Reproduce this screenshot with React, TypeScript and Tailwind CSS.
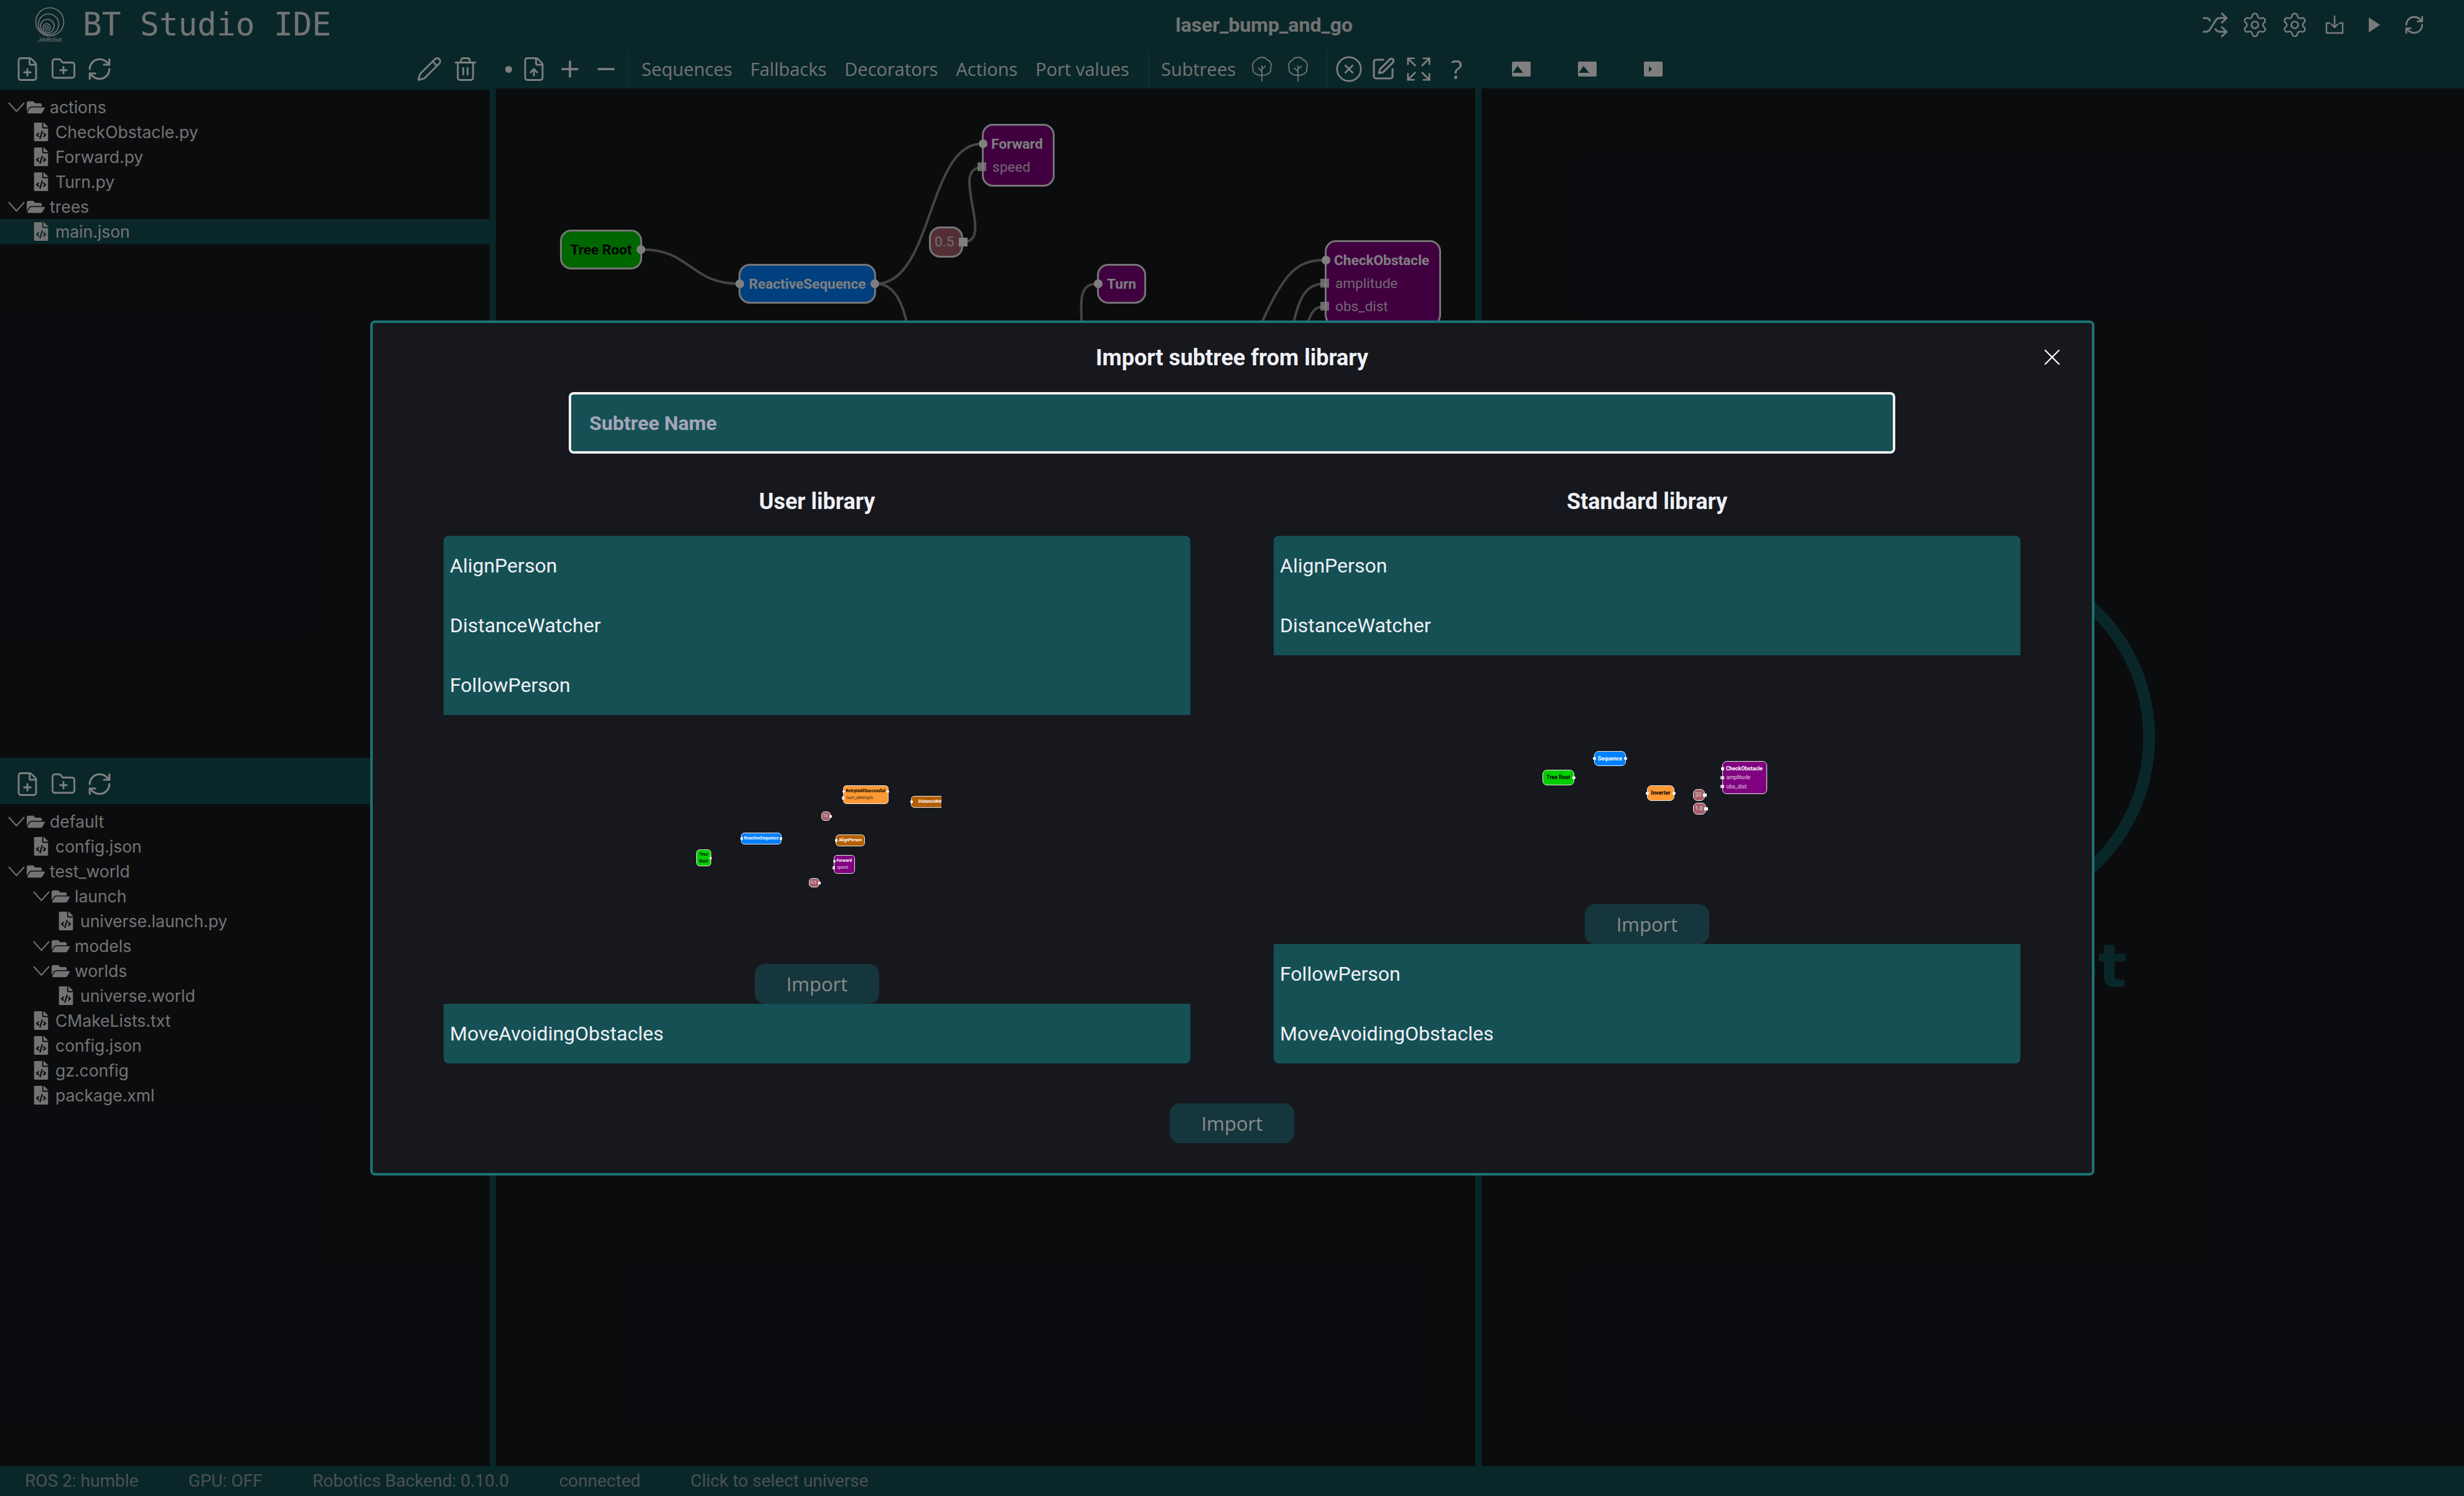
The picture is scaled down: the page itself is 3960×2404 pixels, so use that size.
import {
  CircleX,
  Expand,
  FilePlus,
  FileUp,
  FolderPlus,
  Minus,
  Pencil,
  Plus,
  RefreshCw,
  Settings,
  Shuffle,
  SquarePen,
  Trash2,
  X,
} from "lucide-react";
import { FaFileCode, FaFolderOpen } from "react-icons/fa";

type Entry = { name: string; depth: number; folder?: boolean; active?: boolean };

const actionFiles: Entry[] = [
  { name: "actions", depth: 0, folder: true },
  { name: "CheckObstacle.py", depth: 0 },
  { name: "Forward.py", depth: 0 },
  { name: "Turn.py", depth: 0 },
  { name: "trees", depth: 0, folder: true },
  { name: "main.json", depth: 0, active: true },
];

const universeFiles: Entry[] = [
  { name: "default", depth: 0, folder: true },
  { name: "config.json", depth: 0 },
  { name: "test_world", depth: 0, folder: true },
  { name: "launch", depth: 1, folder: true },
  { name: "universe.launch.py", depth: 1 },
  { name: "models", depth: 1, folder: true },
  { name: "worlds", depth: 1, folder: true },
  { name: "universe.world", depth: 1 },
  { name: "CMakeLists.txt", depth: 0 },
  { name: "config.json", depth: 0 },
  { name: "gz.config", depth: 0 },
  { name: "package.xml", depth: 0 },
];

type GraphNode = {
  label: string;
  x: number;
  y: number;
  w: number;
  h: number;
  bg: string;
  text: string;
  input?: boolean;
  output?: boolean;
  value?: boolean;
  ports?: string[];
};

const GREEN = "#00cc00";
const BLUE = "#0080ff";
const ORANGE = "#ff9933";
const BROWN = "#b35f00";
const PURPLE = "#800080";
const TAG = "#a65e6a";

const canvasNodes: GraphNode[] = [
  { label: "Tree Root", x: 103, y: 227, w: 132, h: 64, bg: GREEN, text: "#000", output: true },
  { label: "ReactiveSequence", x: 390, y: 282, w: 221, h: 64, bg: BLUE, text: "#fff", input: true, output: true },
  { label: "Forward", x: 781, y: 57, w: 117, h: 101, bg: PURPLE, text: "#fff", input: true, ports: ["speed"] },
  { label: "0.5", x: 696, y: 222, w: 55, h: 50, bg: TAG, text: "#ddd", value: true },
  { label: "Turn", x: 966, y: 282, w: 79, h: 64, bg: PURPLE, text: "#fff", input: true },
  { label: "CheckObstacle", x: 1332, y: 244, w: 187, h: 138, bg: PURPLE, text: "#fff", input: true, ports: ["amplitude", "obs_dist"] },
];

const userPreview: GraphNode[] = [
  { label: "Tree Root", x: 6, y: 216, w: 24, h: 27, bg: GREEN, text: "#000", output: true },
  { label: "ReactiveSequence", x: 78, y: 189, w: 65, h: 19, bg: BLUE, text: "#fff", input: true, output: true },
  { label: "RetryUntilSuccessful", x: 242, y: 113, w: 73, h: 30, bg: ORANGE, text: "#000", input: true, output: true, ports: ["num_attempts"] },
  { label: "DistanceWatcher", x: 351, y: 130, w: 75, h: 19, bg: BROWN, text: "#fff", input: true },
  { label: "AlignPerson", x: 230, y: 192, w: 47, h: 19, bg: BROWN, text: "#fff", input: true },
  { label: "Forward", x: 227, y: 225, w: 34, h: 30, bg: PURPLE, text: "#fff", input: true, ports: ["speed"] },
  { label: "10", x: 207, y: 155, w: 15, h: 15, bg: TAG, text: "#ddd", value: true },
  { label: "0.6", x: 187, y: 262, w: 17, h: 15, bg: TAG, text: "#ddd", value: true },
];

const standardPreview: GraphNode[] = [
  { label: "Tree Root", x: 32, y: 184, w: 51, h: 25, bg: GREEN, text: "#000", output: true },
  { label: "Sequence", x: 115, y: 154, w: 51, h: 24, bg: BLUE, text: "#fff", input: true, output: true },
  { label: "Inverter", x: 200, y: 209, w: 44, h: 25, bg: ORANGE, text: "#000", input: true, output: true },
  { label: "20", x: 274, y: 215, w: 19, h: 19, bg: TAG, text: "#ddd", value: true },
  { label: "1.0", x: 274, y: 237, w: 21, h: 19, bg: TAG, text: "#ddd", value: true },
  { label: "CheckObstacle", x: 321, y: 170, w: 72, h: 53, bg: PURPLE, text: "#fff", input: true, ports: ["amplitude", "obs_dist"] },
];

function Handle({ k, side, square }: { k: number; side: "left" | "right"; square?: boolean }) {
  const size = 14 * k;
  return (
    <span
      className={`absolute top-1/2 -translate-y-1/2 bg-white ${square ? "" : "rounded-full"}`}
      style={{ width: size, height: size, [side]: -size / 2 - 3 * k + (square ? 0 : 2 * k) }}
    />
  );
}

function FlowNode({ node, k }: { node: GraphNode; k: number }) {
  const pad = 12 * k;
  return (
    <div
      className="absolute flex flex-col justify-center border-solid border-[#eaeaea]"
      style={{
        left: node.x,
        top: node.y,
        width: node.w,
        height: node.h,
        backgroundColor: node.bg,
        color: node.text,
        borderWidth: 3 * k,
        borderRadius: 18 * k,
        fontSize: 22.6 * k,
        lineHeight: `${37 * k}px`,
      }}
    >
      {node.value ? (
        <div className="relative h-full" style={{ paddingLeft: 6 * k, lineHeight: `${node.h - 6 * k}px` }}>
          {node.label}
          <Handle k={k} side="right" square />
        </div>
      ) : (
        <div className={`relative font-bold ${node.ports ? "text-left" : "text-center"}`} style={{ paddingLeft: pad, paddingRight: pad }}>
          {node.input && <Handle k={k} side="left" />}
          {node.label}
          {node.output && <Handle k={k} side="right" />}
        </div>
      )}
      {node.ports?.map((port) => (
        <div key={port} className="relative font-normal opacity-80" style={{ paddingLeft: 14 * k }}>
          <Handle k={k} side="left" square />
          {port}
        </div>
      ))}
    </div>
  );
}

function Logo() {
  return (
    <svg width="48" height="48" viewBox="0 0 48 48" fill="none" stroke="#e6e6e6" strokeWidth="1.6" className="shrink-0">
      <circle cx="24" cy="24" r="22.5" />
      <circle cx="22" cy="28" r="16.5" />
      <circle cx="20" cy="31" r="11" />
      <circle cx="19" cy="33" r="6" />
      <circle cx="19" cy="33" r="2.5" />
    </svg>
  );
}

function SubtreeIcon({ className }: { className: string }) {
  return (
    <svg width="34" height="40" viewBox="0 0 34 40" fill="none" stroke="currentColor" strokeWidth="1.8" className={className}>
      <path d="M17 30 C6 30 1 24 3 18 C0 12 5 6 9 5 C11 0 23 0 25 5 C30 6 34 12 31 18 C33 24 28 30 17 30 Z" />
      <path d="M17 40 V14 M17 24 L11 18 M17 20 L23 15" />
    </svg>
  );
}

function TreeRow({ entry }: { entry: Entry }) {
  if (entry.folder) {
    return (
      <div className="flex h-[40px] items-center text-[#e6e6e6]" style={{ paddingLeft: 13 + entry.depth * 40 }}>
        <svg width="27" height="16" viewBox="0 0 27 16" fill="none" stroke="#e6e6e6" strokeWidth="2" className="shrink-0">
          <polyline points="1,1 13.5,15 26,1" />
        </svg>
        <FaFolderOpen className="ml-[3px] shrink-0" size={29} />
        <span className="ml-[8px]">{entry.name}</span>
      </div>
    );
  }
  return (
    <div
      className={`flex h-[40px] items-center text-[#e6e6e6] ${entry.active ? "bg-[#134f53]" : ""}`}
      style={{ paddingLeft: 51 + entry.depth * 40 }}
    >
      <FaFileCode className="shrink-0" size={30} />
      <span className="ml-[8px]">{entry.name}</span>
    </div>
  );
}

function FileTools() {
  return (
    <div className="flex items-center gap-[16px] pl-[23px] text-white">
      <FilePlus size={42} strokeWidth={1.6} />
      <FolderPlus size={42} strokeWidth={1.6} />
      <RefreshCw size={42} strokeWidth={1.8} />
    </div>
  );
}

function ImportButton() {
  return (
    <button className="flex h-[64px] w-[200px] items-center justify-center rounded-[16px] bg-[#15363c] font-['Open_Sans',sans-serif] text-[31px] text-[#8a8c8e]">
      Import
    </button>
  );
}

function LibraryRows({ names }: { names: string[] }) {
  return (
    <div className="bg-[#155055]">
      {names.map((name) => (
        <div key={name} className="flex h-[96px] items-center pl-[10px] text-[32px] text-[#f0f0f5]">
          {name}
        </div>
      ))}
    </div>
  );
}

function Library({ title, above, below, nodes, k }: { title: string; above: string[]; below: string[]; nodes: GraphNode[]; k: number }) {
  return (
    <div className="w-[1200px]">
      <h2 className="h-[44px] text-center text-[36px] leading-[44px] font-bold text-[#f0f0f5]">{title}</h2>
      <div className="mt-[33px] overflow-hidden rounded-[8px]">
        <LibraryRows names={above} />
        <div className="flex flex-col items-center">
          <div className="relative h-[400px] w-[400px] overflow-hidden">
            {nodes.map((node) => (
              <FlowNode key={node.label + node.x} node={node} k={k} />
            ))}
          </div>
          <ImportButton />
        </div>
        <LibraryRows names={below} />
      </div>
    </div>
  );
}

export default function App() {
  return (
    <div className="relative flex h-[2404px] w-[3960px] flex-col overflow-hidden bg-[#134f53] font-['Roboto',sans-serif]">
      <header className="flex h-[80px] shrink-0 items-center text-white">
        <div className="ml-[56px] flex w-[48px] flex-col items-center">
          <Logo />
          <span className="mt-[1px] text-[9px] leading-[9px] text-[#e6e6e6]">JdeRobot</span>
        </div>
        <h1 className="ml-[29px] font-['DejaVu_Sans_Mono',monospace] text-[51px] text-[#e6e6e6]">BT Studio IDE</h1>
        <span className="ml-[1357px] text-[32px] font-bold text-[#e6e6e6]">laser_bump_and_go</span>
        <div className="ml-auto mr-[48px] flex items-center text-[#f5f5f5]">
          <span className="flex w-[64px] justify-center"><Shuffle size={44} strokeWidth={1.6} /></span>
          <span className="flex w-[64px] justify-center"><Settings size={44} strokeWidth={1.4} /></span>
          <span className="flex w-[64px] justify-center"><Settings size={44} strokeWidth={1.4} /></span>
          <span className="flex w-[64px] justify-center">
            <svg width="32" height="30" viewBox="0 0 32 30" fill="none" stroke="currentColor" strokeWidth="2.4">
              <path d="M16 0 V19 M10 13 L16 19 L22 13 M9 12 H3 V28 H29 V12 H23" />
            </svg>
          </span>
          <span className="flex w-[64px] justify-center">
            <svg width="18" height="24" viewBox="0 0 18 24" fill="currentColor"><polygon points="0,0 18,12 0,24" /></svg>
          </span>
          <span className="flex w-[64px] justify-center"><RefreshCw size={34} strokeWidth={2} /></span>
        </div>
      </header>

      <div className="flex h-[62px] shrink-0 items-stretch text-white">
        <div className="flex w-[1009px] items-center justify-between pr-[14px]">
          <FileTools />
          <div className="flex items-center">
            <Pencil size={42} strokeWidth={1.6} />
            <Trash2 className="ml-[16px]" size={42} strokeWidth={1.6} />
            <span className="ml-[43px] h-[11px] w-[11px] rounded-full bg-white" />
            <FileUp className="ml-[14px]" size={42} strokeWidth={1.6} />
            <Plus className="ml-[16px]" size={42} strokeWidth={2} />
            <Minus className="ml-[16px]" size={42} strokeWidth={2} />
          </div>
        </div>
        <div className="flex w-[836px] items-center gap-[29px] border-l-2 border-[#1c6469] pl-[20px] font-['Open_Sans',sans-serif] text-[29px] text-[#e6e6e6]">
          <span>Sequences</span>
          <span>Fallbacks</span>
          <span>Decorators</span>
          <span>Actions</span>
          <span>Port values</span>
        </div>
        <div className="flex w-[287px] items-center border-l-2 border-[#1c6469] pl-[19px] font-['Open_Sans',sans-serif] text-[29px] text-[#e6e6e6]">
          <span>Subtrees</span>
          <SubtreeIcon className="ml-[25px] shrink-0" />
          <SubtreeIcon className="ml-[24px] shrink-0" />
        </div>
        <div className="flex flex-1 items-center border-l-2 border-[#1c6469] pl-[11px]">
          <CircleX size={46} strokeWidth={1.4} />
          <SquarePen className="ml-[12px]" size={40} strokeWidth={1.8} />
          <Expand className="ml-[14px]" size={46} strokeWidth={1.4} />
          <span className="ml-[26px] w-[24px] text-center font-['Open_Sans',sans-serif] text-[42px] leading-none">?</span>
          <span className="ml-[77px] flex w-[436px] gap-[76px]">
            {[0, 1].map((i) => (
              <svg key={i} width="30" height="24" viewBox="0 0 30 24">
                <rect width="30" height="24" rx="2" fill="#fff" />
                <polygon points="1,18 9,7 18,18" fill="#134f53" />
              </svg>
            ))}
            <svg width="30" height="24" viewBox="0 0 30 24">
              <rect width="30" height="24" rx="2" fill="#fff" />
              <polygon points="8,7 13,12 8,17" fill="#134f53" />
            </svg>
          </span>
        </div>
      </div>

      <main className="flex min-h-0 flex-1 gap-[10px]">
        <aside className="mt-[2px] flex w-[787px] flex-col font-['Inter',sans-serif] text-[26.5px] leading-[40px]">
          <div className="h-[1074px] bg-[#16181d] pt-[8px]">
            {actionFiles.map((entry) => (
              <TreeRow key={entry.name} entry={entry} />
            ))}
          </div>
          <div className="flex h-[74px] items-center pt-[10px]">
            <FileTools />
          </div>
          <div className="flex-1 bg-[#16181d] pt-[8px]">
            {universeFiles.map((entry, i) => (
              <TreeRow key={entry.name + i} entry={entry} />
            ))}
          </div>
        </aside>

        <section className="relative w-[1574px] overflow-hidden bg-[#16181d]">
          <svg className="absolute inset-0" width="1574" height="2214" viewBox="797 142 1574 2214" fill="none" stroke="#888" strokeWidth="4">
            <path d="M1032 401 C1110 401 1110 456 1187 456" />
            <path d="M1408 456 C1500 456 1490 231 1578 231" />
            <path d="M1548 389 C1600 389 1525 269 1578 269" />
            <path d="M1408 456 C1440 456 1455 490 1465 560" />
            <path d="M1763 456 C1735 456 1735 480 1740 540" />
            <path d="M2129 418 C2080 418 2060 440 2010 560" />
            <path d="M2129 456 C2095 456 2085 480 2070 560" />
            <path d="M2129 493 C2110 493 2105 500 2090 560" />
          </svg>
          {canvasNodes.map((node) => (
            <FlowNode key={node.label} node={node} k={1} />
          ))}
        </section>

        <section className="flex flex-1 flex-col items-center overflow-hidden bg-[#16181d] pt-[738px] text-[#134f53]">
          <svg width="610" height="610" viewBox="0 0 610 610" fill="none" stroke="currentColor" strokeWidth="19" className="shrink-0">
            <circle cx="305" cy="305" r="283" />
          </svg>
          <span className="mt-[14px] font-['DejaVu_Sans',sans-serif] text-[97px] leading-[97px] font-bold">JdeRobot</span>
        </section>
      </main>

      <footer className="flex h-[48px] shrink-0 items-center gap-[80.5px] pl-[40px] text-[28px] text-[#97a1a3]">
        <span>ROS 2: humble</span>
        <span>GPU: OFF</span>
        <span>Robotics Backend: 0.10.0</span>
        <span>connected</span>
        <span>Click to select universe</span>
      </footer>

      <div className="absolute inset-0 bg-black/50" />

      <div className="absolute inset-0 flex items-center justify-center">
        <div className="relative flex h-[1374px] w-[2771px] flex-col items-center rounded-[8px] border-4 border-[#1a7478] bg-[#16181d]">
          <button className="absolute top-[33px] right-[42px] text-white">
            <X size={44} strokeWidth={1.2} />
          </button>
          <h1 className="mt-[34px] h-[44px] text-center text-[36px] leading-[44px] font-bold text-[#f0f0f5]">Import subtree from library</h1>
          <div className="mt-[33px] flex h-[99px] w-[2132px] items-center rounded-[8px] border-4 border-[#eeeeee] bg-[#155055] pl-[29px] text-[32px] font-bold text-[#a6a6b8]">
            Subtree Name
          </div>
          <div className="mt-[55px] flex gap-[134px]">
            <Library title="User library" above={["AlignPerson", "DistanceWatcher", "FollowPerson"]} below={["MoveAvoidingObstacles"]} nodes={userPreview} k={0.295} />
            <Library title="Standard library" above={["AlignPerson", "DistanceWatcher"]} below={["FollowPerson", "MoveAvoidingObstacles"]} nodes={standardPreview} k={0.387} />
          </div>
          <div className="mt-[64px]">
            <ImportButton />
          </div>
        </div>
      </div>
    </div>
  );
}
